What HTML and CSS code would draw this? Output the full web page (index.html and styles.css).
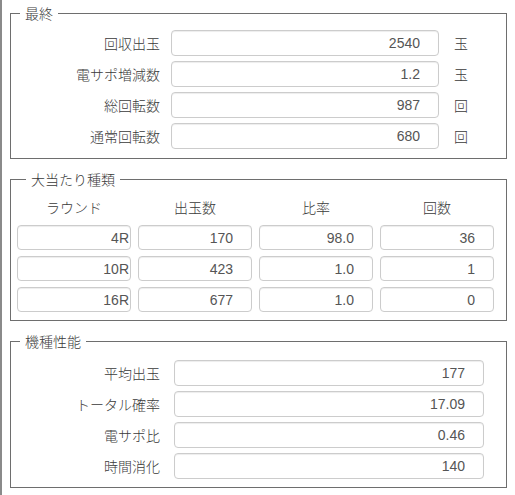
FILE: index.html
```html
<!DOCTYPE html>
<html lang="ja">
  <head>
    <meta charset="UTF-8" />
    <meta name="viewport" content="width=device-width, initial-scale=1.0" />
    <title>機種計算</title>
    <link rel="stylesheet" href="styles.css">
  </head>
  <body>
    <div class="page">
      <!-- 最終結果 -->
      <fieldset class="box box-final">
        <legend>最終</legend>
        <div class="form-grid">
          <label class="label">回収出玉</label>
          <input class="field" type="text" value="2540" readonly />
          <span class="unit">玉</span>

          <label class="label">電サポ増減数</label>
          <input class="field" type="text" value="1.2" readonly />
          <span class="unit">玉</span>

          <label class="label">総回転数</label>
          <input class="field" type="text" value="987" readonly />
          <span class="unit">回</span>

          <label class="label">通常回転数</label>
          <input class="field" type="text" value="680" readonly />
          <span class="unit">回</span>
        </div>
      </fieldset>

      <!-- 大当たり種類 -->
      <fieldset class="box box-bonus">
        <legend>大当たり種類</legend>
        <div class="bonus-grid">
          <div class="col-head">ラウンド</div>
          <div class="col-head">出玉数</div>
          <div class="col-head">比率</div>
          <div class="col-head">回数</div>

          <input class="field field-round" type="text" value="4R" readonly />
          <input class="field" type="text" value="170" readonly />
          <input class="field" type="text" value="98.0" readonly />
          <input class="field" type="text" value="36" readonly />

          <input class="field field-round" type="text" value="10R" readonly />
          <input class="field" type="text" value="423" readonly />
          <input class="field" type="text" value="1.0" readonly />
          <input class="field" type="text" value="1" readonly />

          <input class="field field-round" type="text" value="16R" readonly />
          <input class="field" type="text" value="677" readonly />
          <input class="field" type="text" value="1.0" readonly />
          <input class="field" type="text" value="0" readonly />
        </div>
      </fieldset>

      <!-- 機種性能 -->
      <fieldset class="box box-spec">
        <legend>機種性能</legend>
        <div class="spec-grid">
          <label class="label">平均出玉</label>
          <input class="field" type="text" value="177" readonly />

          <label class="label">トータル確率</label>
          <input class="field" type="text" value="17.09" readonly />

          <label class="label">電サポ比</label>
          <input class="field" type="text" value="0.46" readonly />

          <label class="label">時間消化</label>
          <input class="field" type="text" value="140" readonly />
        </div>
      </fieldset>
    </div>
  </body>
</html>
```

FILE: styles.css
```css
* {
  margin: 0;
  padding: 0;
  box-sizing: border-box;
}

body {
  background-color: #fff;
  color: #3a3a3a;
  font-family: "Noto Sans CJK JP", sans-serif;
  font-size: 14px;
  font-weight: 300;
  border-left: 2px solid #8a8a8a;
  min-height: 100vh;
}

.page {
  padding: 3px 0 0 8px;
  display: flex;
  flex-direction: column;
  gap: 10px;
}

/* Group boxes */
.box {
  width: 497px;
  border: 1px solid #6e6e6e;
  padding: 0;
}

.box legend {
  margin-left: 9px;
  padding: 0 5px;
  font-size: 14px;
  line-height: 20px;
}

.box-final {
  padding: 7px 0 9px;
}

.box-bonus {
  padding: 8px 0 8px 6px;
}

.box-spec {
  padding: 9px 0 8px;
}

/* Label / input rows */
.form-grid {
  display: grid;
  grid-template-columns: 149px 268px 30px;
  column-gap: 11px;
  row-gap: 5px;
  align-items: center;
}

.form-grid .unit {
  padding-left: 4px;
}

.spec-grid {
  display: grid;
  grid-template-columns: 149px 310px;
  column-gap: 14px;
  row-gap: 5px;
  align-items: center;
}

.label {
  text-align: right;
  white-space: nowrap;
}

/* Bonus table */
.bonus-grid {
  display: grid;
  grid-template-columns: repeat(4, 114px);
  column-gap: 7px;
  row-gap: 6px;
}

.col-head {
  text-align: center;
  line-height: 20px;
  margin-bottom: 2px;
}

/* Inputs */
.field {
  height: 26px;
  width: 100%;
  border: 1px solid #ccc;
  border-radius: 4px;
  box-shadow: inset 0 1px 1px rgba(0, 0, 0, 0.075);
  background: #fff;
  padding: 0 18px 0 6px;
  text-align: right;
  font-family: "Liberation Sans", Arial, sans-serif;
  font-size: 14px;
  color: #555;
  outline: none;
}

.bonus-grid .field {
  height: 25px;
}

.bonus-grid .field-round {
  padding-right: 1px;
}
```
